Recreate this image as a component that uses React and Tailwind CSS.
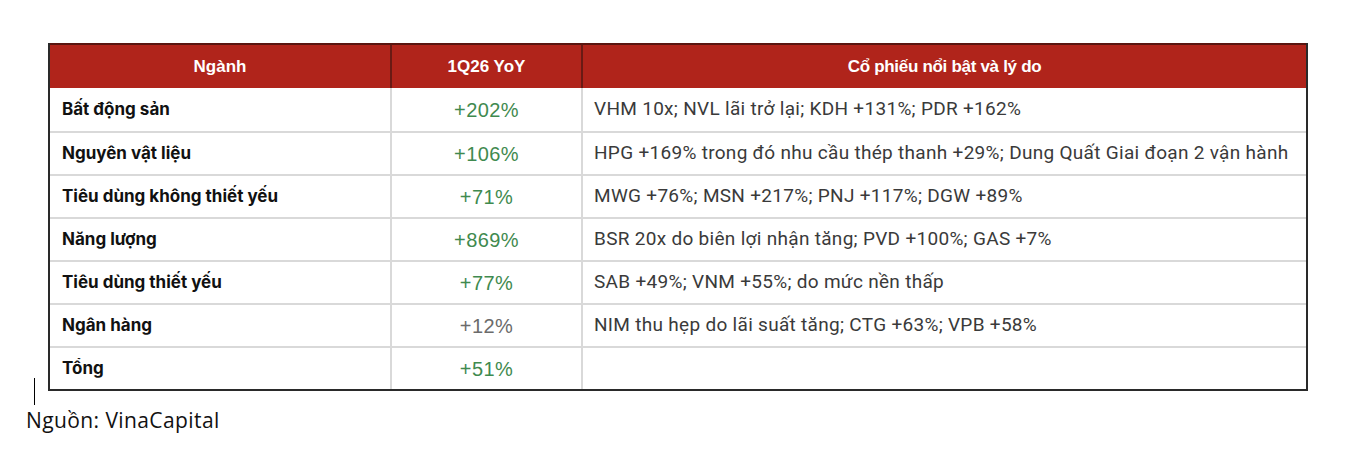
const rows = [
  {
    name: "Bất động sản",
    yoy: "+202%",
    up: true,
    note: "VHM 10x; NVL lãi trở lại; KDH +131%; PDR +162%",
  },
  {
    name: "Nguyên vật liệu",
    yoy: "+106%",
    up: true,
    note: "HPG +169% trong đó nhu cầu thép thanh +29%; Dung Quất Giai đoạn 2 vận hành",
  },
  {
    name: "Tiêu dùng không thiết yếu",
    yoy: "+71%",
    up: true,
    note: "MWG +76%; MSN +217%; PNJ +117%; DGW +89%",
  },
  {
    name: "Năng lượng",
    yoy: "+869%",
    up: true,
    note: "BSR 20x do biên lợi nhận tăng; PVD +100%; GAS +7%",
  },
  {
    name: "Tiêu dùng thiết yếu",
    yoy: "+77%",
    up: true,
    note: "SAB +49%; VNM +55%; do mức nền thấp",
  },
  {
    name: "Ngân hàng",
    yoy: "+12%",
    up: false,
    note: "NIM thu hẹp do lãi suất tăng; CTG +63%; VPB +58%",
  },
  { name: "Tổng", yoy: "+51%", up: true, note: "" },
];

const App = () => {
  return (
    <div className="bg-white w-[1366px] h-[451px] relative">
      <div className="pt-[43px] pl-[48px]">
        <div className="w-[1260px] border-2 border-[#2a2a2a] font-['Liberation_Sans',sans-serif]">
          <div className="grid grid-cols-[342px_191px_1fr] h-[45px] bg-[#b0241b] text-white font-bold text-[17px] border-t-2 border-[#5a1510] -mt-[2px]">
            <div className="flex items-center justify-center border-r-2 border-[#6a1a14]">
              Ngành
            </div>
            <div className="flex items-center justify-center border-r-2 border-[#6a1a14]">
              1Q26 YoY
            </div>
            <div className="flex items-center justify-center tracking-[-0.3px]">
              Cổ phiếu nổi bật và lý do
            </div>
          </div>
          {rows.map((row, i) => (
            <div
              key={row.name}
              className={`grid grid-cols-[342px_191px_1fr] h-[43px] ${
                i > 0 ? "border-t-2 border-[#d9d9d9]" : ""
              }`}
            >
              <div className="flex items-center pl-[12px] border-r-2 border-[#d9d9d9] font-bold text-[#111] text-[17px] font-['Inter',sans-serif]">
                {row.name}
              </div>
              <div
                className={`flex items-center justify-center border-r-2 border-[#d9d9d9] text-[20px] tracking-[0.4px] ${
                  row.up ? "text-[#3f8a4f]" : "text-[#6b6b6b]"
                }`}
              >
                {row.yoy}
              </div>
              <div className="flex items-center pl-[11px] text-[#3a3a3a] text-[19px] font-['Roboto',sans-serif] tracking-[0.3px]">
                {row.note}
              </div>
            </div>
          ))}
        </div>
      </div>
      <div className="absolute left-[34px] top-[378px] w-[1px] h-[27px] bg-black" />
      <div className="pt-[19px] pl-[26px] text-[21px] tracking-[0.4px] text-[#111] font-['Open_Sans',sans-serif] leading-none">
        Nguồn: VinaCapital
      </div>
    </div>
  );
};

export default App;
